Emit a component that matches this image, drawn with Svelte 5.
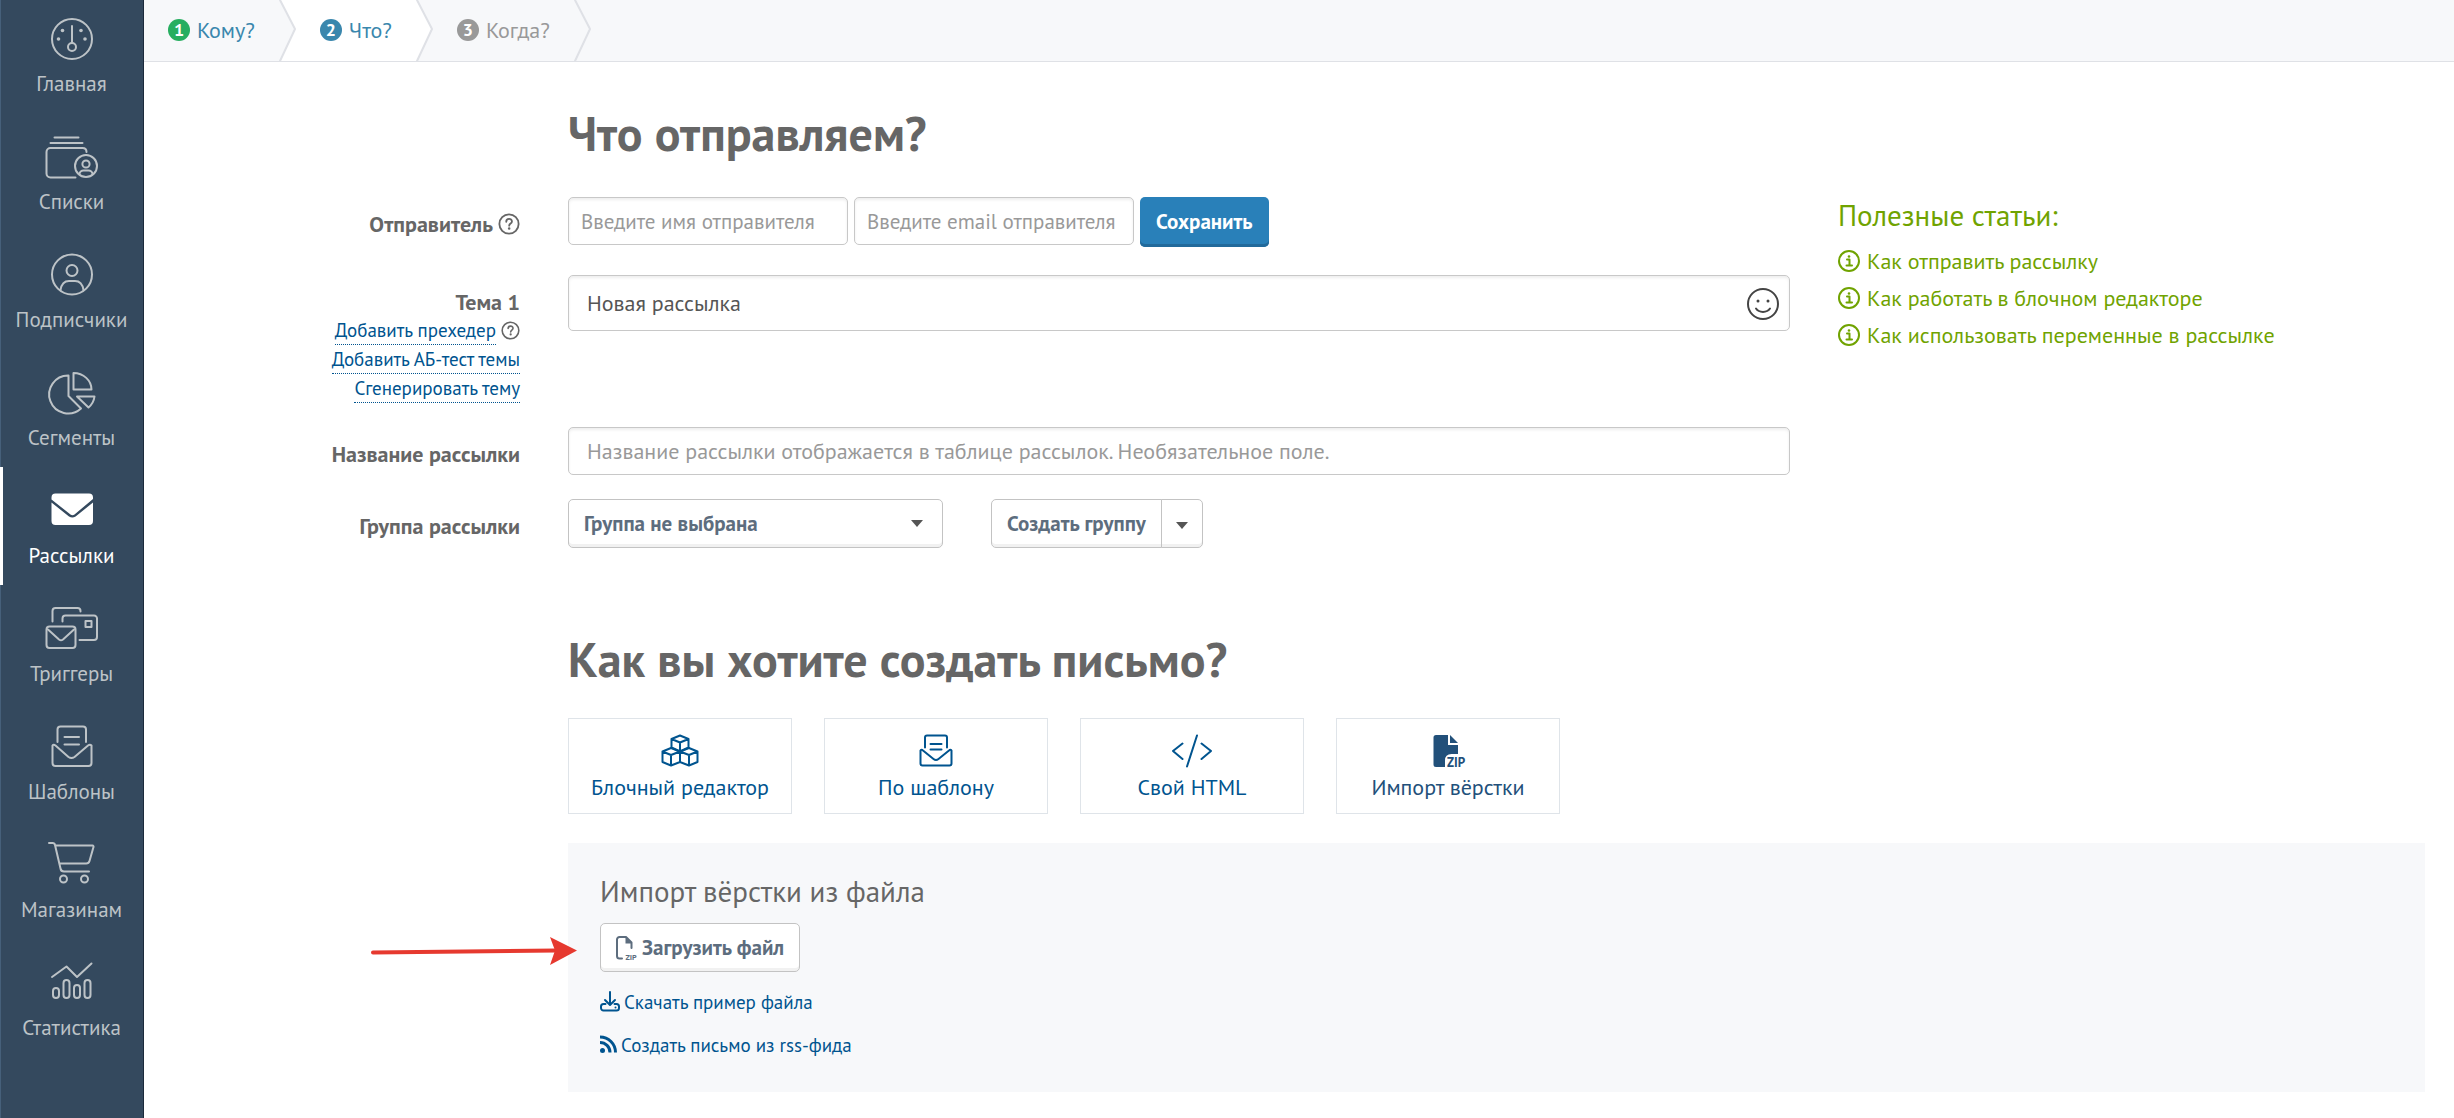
<script lang="ts">
  const menu = [
    { id: "home", name: "Главная" },
    { id: "lists", name: "Списки" },
    { id: "people", name: "Подписчики" },
    { id: "segments", name: "Сегменты" },
    { id: "mail", name: "Рассылки" },
    { id: "triggers", name: "Триггеры" },
    { id: "templates", name: "Шаблоны" },
    { id: "shop", name: "Магазинам" },
    { id: "stats", name: "Статистика" }
  ];

  const steps = [
    { name: "Кому?", state: "done" },
    { name: "Что?", state: "current" },
    { name: "Когда?", state: "next" }
  ];

  const articles = [
    "Как отправить рассылку",
    "Как работать в блочном редакторе",
    "Как использовать переменные в рассылке"
  ];

  const editors = [
    { id: "blocks", name: "Блочный редактор" },
    { id: "template", name: "По шаблону" },
    { id: "html", name: "Свой HTML" },
    { id: "import", name: "Импорт вёрстки" }
  ];

  let section = $state("mail");
  let editor = $state("import");
  let senderName = $state("");
  let senderEmail = $state("");
  let subject = $state("Новая рассылка");
  let title = $state("");
</script>

{#snippet menuIcon(id)}
  <svg class="menu-icon" viewBox="0 0 56 44" aria-hidden="true">
    {#if id === "home"}
      <circle cx="28" cy="22" r="20" />
      <path d="M28 9v17" />
      <circle cx="28" cy="30" r="4" />
      <g class="solid">
        <circle cx="14.5" cy="22" r="1.8" />
        <circle cx="18.5" cy="13.5" r="1.8" />
        <circle cx="37" cy="13.5" r="1.8" />
        <circle cx="41" cy="22" r="1.8" />
      </g>
    {:else if id === "lists"}
      <path d="M10.500 2.500h24M6.500 8h32M42.500 17c0-2-1-4-4-4H6.500a4 4 0 0 0-4 4v21.500a4 4 0 0 0 4 4H31.500" />
      <circle cx="42" cy="31" r="11" />
      <circle cx="42" cy="29" r="3.6" />
      <path d="M35.500 39c0-2 2-3.500 4-3.500h5c2 0 4 1.500 4 3.500" />
    {:else if id === "people"}
      <circle cx="28" cy="21.500" r="20" />
      <circle cx="28" cy="17.500" r="5.500" />
      <path d="M16.500 37c1-6 4-9 8.500-9h6c4.500 0 7.500 3 8.500 9" />
    {:else if id === "segments"}
      <path d="M24.500 4.500v20.500l12.500 12.500a19 19 0 1 1-12.500-33z" />
      <path d="M29.500 2v16.500h18c0-9-8-16.500-18-16.500z" />
      <path d="M33 25.500h17.500c-.5 4.500-2.500 8-6 11z" />
    {:else if id === "mail"}
      <g class="solid">
        <path d="M11.500 4.500H45a4 4 0 0 1 4 4v1.500L30.500 25.500q-2 1.500-4 0L7.500 10.500v-2a4 4 0 0 1 4-4z" />
        <path d="M7.500 13.500L25 27.500q3.300 2.200 6.600 0L49 13.500V32a4 4 0 0 1-4 4H11.500a4 4 0 0 1-4-4z" />
      </g>
    {:else if id === "triggers"}
      <path d="M8.500 14.500V4a3 3 0 0 1 3-3h22a3 3 0 0 1 3 3v.5M18.500 14.500v-3a3 3 0 0 1 3-3h28.500a3 3 0 0 1 3 3v18.500a3 3 0 0 1-3 3h-14.500" />
      <rect x="41.500" y="14" width="6" height="6" />
      <rect x="2.500" y="19.500" width="29" height="21.500" rx="3" />
      <path d="M4 22.500l11 10q2 1.500 4 0l11-10" />
    {:else if id === "templates"}
      <path d="M13.500 17V4.500a3 3 0 0 1 3-3h22.500a3 3 0 0 1 3 3V17M20.500 12h14.500M20.500 19.500h14.500" />
      <path d="M8.500 20.500q1-1.500 3 0l13 11.500q3 2 6 0l13.500-11.500q2-1.500 3.500 0V38a3 3 0 0 1-3 3H11.500a3 3 0 0 1-3-3z" />
    {:else if id === "shop"}
      <path d="M5 0h3.500a2.500 2.500 0 0 1 2.500 2L16.500 25.500a3.500 3.500 0 0 0 3.500 3H45M11.500 2.500H48.500a1.200 1.200 0 0 1 1 1.500L45.500 18a3.500 3.500 0 0 1-3.500 2.500H15.500" />
      <circle cx="19.500" cy="36" r="3.500" />
      <circle cx="40.500" cy="36" r="3.500" />
    {:else if id === "stats"}
      <path d="M8 16L22.500 5.500L33 16L47.500 2.500" />
      <rect x="9" y="27" width="6" height="10" rx="3" />
      <rect x="19.500" y="19" width="6" height="18" rx="3" />
      <rect x="30" y="24" width="6" height="13" rx="3" />
      <rect x="40.500" y="19" width="6" height="18" rx="3" />
    {/if}
  </svg>
{/snippet}

{#snippet editorIcon(id)}
  <svg class="editor-icon" viewBox="0 0 44 34" aria-hidden="true">
    {#if id === "blocks"}
      <path d="M13.500 5L22 1.500L30.500 5V13.500L22 17.500L13.500 13.500zM13.500 5L22 8.500L30.500 5M22 8.500V17.500" />
      <path d="M13 14L4.500 17.500V28L13 31.500L22 28V17.500zM4.500 17.500L13 21L22 17.500M13 21V31.500" />
      <path d="M31 14L22 17.500V28L31 31.500L39.500 28V17.500zM22 17.500L31 21L39.500 17.500M31 21V31.500" />
    {:else if id === "template"}
      <path d="M11 13.500V3.500a2 2 0 0 1 2-2h18a2 2 0 0 1 2 2V13.500M16.500 10h11M16.500 15.500h11" />
      <path d="M6.500 16.500q1-1.500 2.500 0l10.500 8.500q2.500 2 5 0l10.500-8.500q1.500-1.500 2.500 0V29.500a2 2 0 0 1-2 2H8.500a2 2 0 0 1-2-2z" />
    {:else if id === "html"}
      <path d="M12.500 9.500L3 17L12.500 25M31.500 9.500L41 17L31.500 25M27 1.500L17 32.500" />
    {:else}
      <path class="solid" d="M10 1H22V11H32V20H25.500Q19 20 19 26.500V33H10Q7.500 33 7.500 30.500V3.500Q7.500 1 10 1zM24 1L32 9H24z" />
      <text x="21" y="33">ZIP</text>
    {/if}
  </svg>
{/snippet}

{#snippet help()}
  <svg class="help" viewBox="0 0 24 24" role="img" aria-label="Подсказка">
    <circle cx="12" cy="12" r="10.500" />
    <path d="M9 9.500c0-4 6.200-4 6.200-.3 0 2.300-3 2.300-3 4.600" />
    <circle class="solid" cx="12.200" cy="17" r="1.400" />
  </svg>
{/snippet}

{#snippet caret()}
  <svg class="caret" viewBox="0 0 12 7" aria-hidden="true"><path d="M0 0h12L6 7z" /></svg>
{/snippet}

<div class="app">
  <nav class="sidebar">
    <ul>
      {#each menu as item}
        <li>
          <a href="#{item.id}" class:active={section === item.id} onclick={() => (section = item.id)}>
            {@render menuIcon(item.id)}
            <span>{item.name}</span>
          </a>
        </li>
      {/each}
    </ul>
  </nav>

  <div class="page">
    <ol class="steps">
      {#each steps as step, i}
        <li class={step.state}>
          <a href="#step{i + 1}"><b>{i + 1}</b>{step.name}</a>
          <svg class="chevron" viewBox="0 0 16 61" aria-hidden="true">
            <path class="rest" d="M0 0H16V61H0L15 29z" />
            <path class="edge" d="M0 0L15 29L0 61" />
          </svg>
        </li>
      {/each}
    </ol>

    <main>
      <h1>Что отправляем?</h1>

      <div class="top">
        <form class="fields" onsubmit={(e) => e.preventDefault()}>
          <div class="label">
            <label for="sender">Отправитель</label>
            {@render help()}
          </div>
          <div class="controls sender">
            <input id="sender" type="text" placeholder="Введите имя отправителя" bind:value={senderName} />
            <input type="email" aria-label="Email отправителя" placeholder="Введите email отправителя" bind:value={senderEmail} />
            <button class="primary" type="submit">Сохранить</button>
          </div>

          <div class="label theme">
            <label for="subject">Тема 1</label>
            <div class="extra"><a href="#preheader">Добавить прехедер</a>{@render help()}</div>
            <div class="extra"><a href="#abtest">Добавить АБ-тест темы</a></div>
            <div class="extra"><a href="#generate">Сгенерировать тему</a></div>
          </div>
          <div class="controls subject">
            <input id="subject" type="text" bind:value={subject} />
            <button class="emoji" type="button" aria-label="Эмодзи">
              <svg viewBox="0 0 32 32">
                <circle cx="16" cy="16" r="15" />
                <path d="M9 20.500c3 4.500 11 4.500 14 0" />
                <circle class="solid" cx="11" cy="13" r="1.500" />
                <circle class="solid" cx="21" cy="13" r="1.500" />
              </svg>
            </button>
          </div>

          <div class="label"><label for="title">Название рассылки</label></div>
          <div class="controls">
            <input
              id="title"
              class="wide"
              type="text"
              placeholder="Название рассылки отображается в таблице рассылок. Необязательное поле."
              bind:value={title}
            />
          </div>

          <div class="label"><label for="group">Группа рассылки</label></div>
          <div class="controls group">
            <div class="select">
              <select id="group">
                <option>Группа не выбрана</option>
              </select>
              {@render caret()}
            </div>
            <div class="split">
              <button class="plain" type="button">Создать группу</button>
              <button class="plain more" type="button" aria-label="Ещё">{@render caret()}</button>
            </div>
          </div>
        </form>

        <aside>
          <h3>Полезные статьи:</h3>
          <ul>
            {#each articles as article}
              <li>
                <a href="#help">
                  <svg viewBox="0 0 22 22" aria-hidden="true">
                    <circle cx="11" cy="11" r="10" />
                    <path d="M9 9.500h2.500v6M8.500 15.500h5.500" />
                    <circle class="solid" cx="11" cy="6.500" r="1.300" />
                  </svg>
                  {article}
                </a>
              </li>
            {/each}
          </ul>
        </aside>
      </div>

      <section class="create">
        <h2>Как вы хотите создать письмо?</h2>
        <div class="cards">
          {#each editors as item}
            <button type="button" class:chosen={editor === item.id} onclick={() => (editor = item.id)}>
              {@render editorIcon(item.id)}
              <span>{item.name}</span>
            </button>
          {/each}
        </div>

        <div class="panel">
          <h3>Импорт вёрстки из файла</h3>
          <button class="plain upload" type="button">
            <svg viewBox="0 0 22 24" aria-hidden="true">
              <path d="M6 22.500H3.500a2.500 2.500 0 0 1-2.500-2.500V3.500A2.500 2.500 0 0 1 3.500 1H10l5.500 5.500V12" />
              <path class="solid" d="M9.500 1L16 7.500H9.500z" />
              <text x="9.500" y="23.500">ZIP</text>
            </svg>
            Загрузить файл
          </button>
          <a href="#example">
            <svg viewBox="0 0 20 20" aria-hidden="true">
              <path d="M10 0v12.500M5 8l5 5l5-5M5.500 12H3.500a2.500 2.500 0 0 0-2.500 2.500v1.500a2.500 2.500 0 0 0 2.500 2.500h13a2.500 2.500 0 0 0 2.500-2.500v-1.500a2.500 2.500 0 0 0-2.500-2.500H14.500" />
              <circle class="solid" cx="15.500" cy="15.500" r="1" />
            </svg>
            Скачать пример файла
          </a>
          <a href="#rss">
            <svg class="rss" viewBox="0 0 17 20" aria-hidden="true">
              <circle class="solid" cx="2.500" cy="15.500" r="2.500" />
              <path d="M0 7.500a10 10 0 0 1 10 10M0 2a15.500 15.500 0 0 1 15.500 15.500" />
            </svg>
            Создать письмо из rss-фида
          </a>

          <svg class="arrow" viewBox="0 0 208 32" aria-hidden="true">
            <path class="shaft" d="M3 17.500L186 15.500" />
            <path class="head" d="M180 2L207 15.500L180 30L185 15.500z" />
          </svg>
        </div>
      </section>
    </main>
  </div>
</div>

<style>
  :global(body) {
    margin: 0;
    background: #fff;
  }

  .app {
    display: flex;
    min-height: 100vh;
    font-family: "PT Sans", "Noto Sans", sans-serif;
    font-size: 22px;
    line-height: 28px;
    color: #666;
  }

  ul,
  ol {
    list-style: none;
    margin: 0;
    padding: 0;
  }

  a {
    color: #00548f;
    text-decoration: none;
  }

  svg {
    flex: none;
    fill: none;
    stroke: currentColor;
    stroke-width: 2;
    stroke-linecap: round;
    stroke-linejoin: round;
    overflow: visible;
  }

  .solid,
  text {
    fill: currentColor;
    stroke: none;
  }

  text {
    font-size: 13px;
    font-weight: 700;
  }

  input,
  select,
  button {
    box-sizing: border-box;
    margin: 0;
    font-family: inherit;
    font-size: 21px;
    line-height: 28px;
    color: inherit;
  }

  button {
    cursor: pointer;
  }

  /* sidebar */
  .sidebar {
    box-sizing: border-box;
    flex: none;
    width: 144px;
    overflow: hidden;
    background: #34495e;
    border-right: 1px solid #1b2a3b;
    box-shadow: inset 1px 0 #46607a;
    font-size: 21px;
  }

  .sidebar ul {
    margin-top: -5px;
  }

  .sidebar a {
    box-sizing: border-box;
    display: flex;
    flex-direction: column;
    align-items: center;
    height: 118px;
    padding-top: 22px;
    gap: 9px;
    color: #bdc3c7;
  }

  .sidebar a.active {
    color: #fff;
    box-shadow: inset 3px 0 #fff;
  }

  .menu-icon {
    width: 56px;
    height: 44px;
  }

  /* steps */
  .page {
    flex: 1;
    min-width: 0;
  }

  .steps {
    display: flex;
    background: #f7f8fa;
    border-bottom: 1px solid #dfe1e6;
  }

  .steps li {
    display: flex;
  }

  .steps a {
    display: flex;
    align-items: center;
    gap: 7px;
    height: 59px;
    padding: 0 25px 0 24px;
    color: #3a87ad;
  }

  .steps b {
    width: 22px;
    height: 22px;
    border-radius: 50%;
    background: #3a87ad;
    color: #fff;
    font-size: 18px;
    line-height: 22px;
    text-align: center;
  }

  .done b {
    background: #27ae60;
  }

  .steps .next a {
    color: #999;
  }

  .next b {
    background: #999;
  }

  .current {
    background: #fff;
  }

  .chevron {
    width: 16px;
    height: 61px;
  }

  .rest {
    fill: #f7f8fa;
    stroke: none;
  }

  .done .rest {
    fill: #fff;
  }

  .edge {
    stroke: #dfe1e6;
  }

  /* form */
  main {
    padding: 43px 29px 26px 0;
  }

  h1,
  h2 {
    margin: 0;
    font-size: 48px;
    line-height: 56px;
    font-weight: 700;
  }

  h1 {
    padding-left: 424px;
  }

  h3 {
    margin: 0;
    font-size: 29px;
    line-height: 36px;
    font-weight: 400;
  }

  .top {
    display: flex;
    gap: 48px;
    margin-top: 36px;
  }

  .fields {
    flex: 1;
    display: grid;
    grid-template-columns: 376px minmax(0, 1fr);
    grid-template-rows: 78px 152px 72px 50px;
    column-gap: 48px;
  }

  .label {
    display: flex;
    align-items: center;
    align-self: start;
    justify-content: flex-end;
    gap: 5px;
    padding-top: 13px;
    font-weight: 700;
  }

  .theme {
    flex-direction: column;
    align-items: flex-end;
    gap: 0;
  }

  .extra {
    display: flex;
    align-items: center;
    gap: 5px;
    font-size: 19px;
    font-weight: 400;
  }

  .extra a {
    border-bottom: 1px dotted #00548f;
  }

  .help {
    width: 22px;
    height: 22px;
  }

  .extra .help {
    width: 19px;
    height: 19px;
  }

  .controls {
    display: flex;
    align-items: flex-start;
  }

  input {
    height: 48px;
    padding: 0 12px;
    border: 1px solid #c8c8c8;
    border-radius: 5px;
    background: #fff;
    box-shadow: inset 0 2px 3px rgba(0, 0, 0, 0.07);
    color: #555;
  }

  input::placeholder {
    color: #999;
    opacity: 1;
  }

  .sender {
    gap: 6px;
  }

  .sender input {
    width: 280px;
  }

  .primary {
    height: 50px;
    padding: 0 16px;
    border: 0;
    border-radius: 5px;
    background: #2980b9;
    box-shadow: inset 0 -3px #226a9b;
    color: #fff;
    font-weight: 700;
  }

  .subject {
    position: relative;
  }

  .subject input {
    width: 100%;
    height: 56px;
    padding: 0 64px 0 18px;
    font-size: 22px;
  }

  .emoji {
    position: absolute;
    top: 13px;
    right: 11px;
    width: 32px;
    height: 32px;
    padding: 0;
    border: 0;
    background: none;
    color: #444;
  }

  .emoji svg {
    display: block;
  }

  .wide {
    width: 100%;
    padding: 0 18px;
    font-size: 22px;
  }

  .group {
    gap: 48px;
  }

  .select {
    position: relative;
    width: 375px;
  }

  .select .caret {
    position: absolute;
    top: 21px;
    right: 20px;
    pointer-events: none;
  }

  select,
  .plain {
    height: 49px;
    padding: 0 15px;
    border: 1px solid #c3c3c3;
    border-radius: 5px;
    background: #fff;
    box-shadow: inset 0 -3px #f1f1f1;
    color: #5d6d7e;
    font-weight: 700;
  }

  select {
    width: 100%;
    appearance: none;
  }

  .caret {
    width: 12px;
    height: 7px;
    fill: #555;
    stroke: none;
  }

  .split {
    display: flex;
  }

  .split .plain:first-child {
    border-radius: 5px 0 0 5px;
  }

  .split .more {
    display: flex;
    align-items: center;
    justify-content: center;
    width: 42px;
    margin-left: -1px;
    padding: 3px 0 0;
    border-radius: 0 5px 5px 0;
  }

  /* articles */
  aside {
    flex: none;
    width: 587px;
    color: #70a300;
  }

  aside ul {
    display: grid;
    gap: 9px;
    margin-top: 14px;
  }

  aside a {
    display: flex;
    align-items: center;
    gap: 7px;
    color: #70a300;
  }

  aside a svg {
    width: 22px;
    height: 22px;
  }

  /* editors */
  .create {
    margin-top: 82px;
    padding-left: 424px;
  }

  .cards {
    display: flex;
    flex-wrap: wrap;
    gap: 32px;
    margin-top: 31px;
  }

  .cards button {
    display: flex;
    flex-direction: column;
    align-items: center;
    justify-content: center;
    gap: 5px;
    width: 224px;
    height: 96px;
    padding: 2px 0 0;
    border: 1px solid #dfe4e9;
    background: #fff;
    color: #00548f;
    font-size: 22px;
  }

  .cards .chosen {
    color: #22507a;
  }

  .editor-icon {
    width: 44px;
    height: 34px;
  }

  .panel {
    position: relative;
    display: flex;
    flex-direction: column;
    align-items: flex-start;
    margin-top: 29px;
    padding: 30px 32px 33px;
    background: #f7f8fa;
  }

  .panel a {
    display: flex;
    align-items: center;
    gap: 4px;
    font-size: 19px;
    margin-top: 15px;
  }

  .panel a svg {
    width: 20px;
    height: 20px;
  }

  .panel a .rss {
    width: 17px;
    stroke-width: 3;
    stroke-linecap: butt;
  }

  .upload {
    display: flex;
    align-items: center;
    gap: 4px;
    margin-top: 14px;
    margin-bottom: 1px;
  }

  .upload svg {
    width: 22px;
    height: 24px;
  }

  .upload text {
    font-size: 8px;
  }

  .arrow {
    position: absolute;
    top: 92px;
    left: -198px;
    width: 208px;
    height: 32px;
  }

  .shaft {
    stroke: #e6392f;
    stroke-width: 4;
  }

  .head {
    fill: #e6392f;
    stroke: none;
  }

  @media (max-width: 1700px) {
    .top {
      flex-wrap: wrap;
    }

    .fields {
      flex-basis: 100%;
    }

    aside {
      padding-left: 424px;
    }
  }
</style>
